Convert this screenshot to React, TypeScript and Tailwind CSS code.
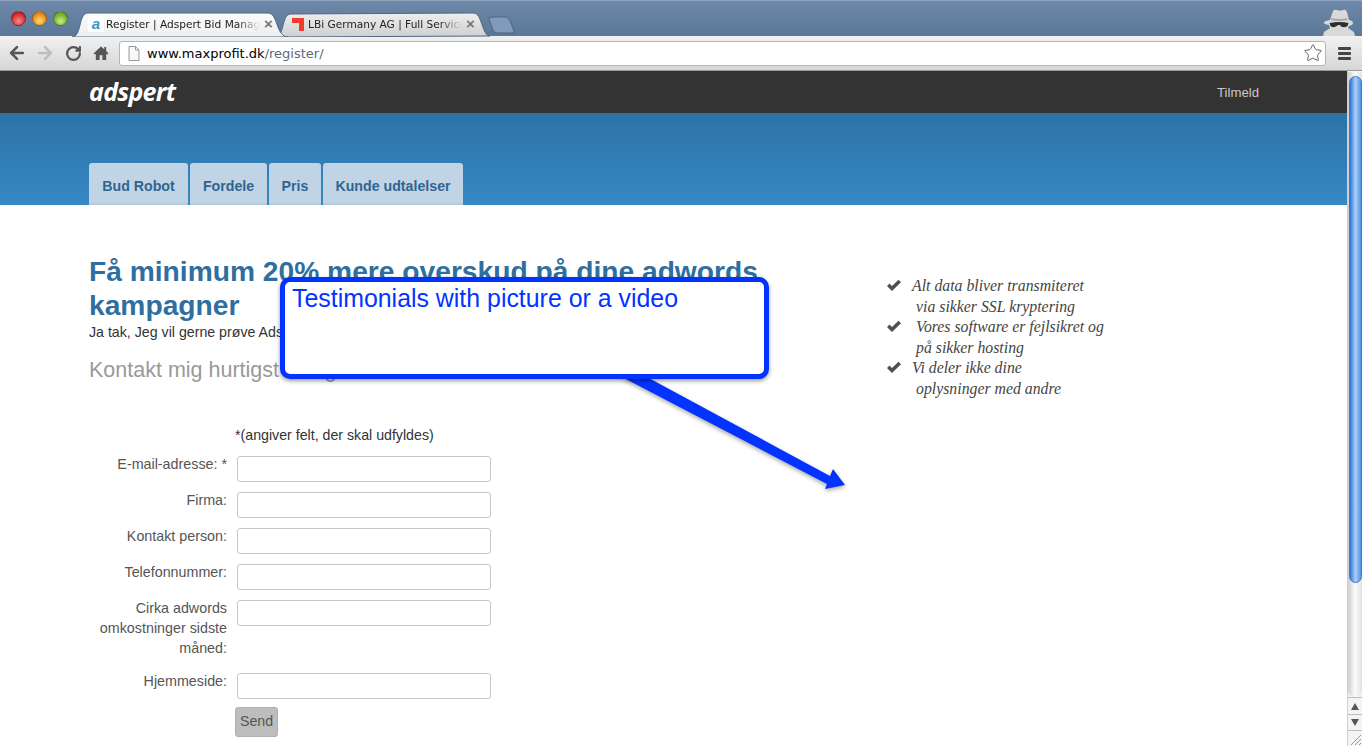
import { ArrowLeft, ArrowRight, RotateCw, Star } from "lucide-react";

const sans = "font-['Liberation_Sans',Arial,sans-serif]";

function TrafficLight({ color }: { color: string }) {
  return <span className="block w-[15px] h-[15px] rounded-full border border-black/30" style={{ background: color }} />;
}

function TabStrip() {
  return (
    <div className="relative h-[36px] bg-gradient-to-b from-[#6d88a8] to-[#5b7899] border-t border-[#8ea3bc] shrink-0">
      <div className="flex items-center gap-[6px] pl-[11px] pt-[10px]">
        <TrafficLight color="radial-gradient(circle at 50% 70%, #f88, #c9252b 70%)" />
        <TrafficLight color="radial-gradient(circle at 50% 70%, #fd6, #e0831c 70%)" />
        <TrafficLight color="radial-gradient(circle at 50% 70%, #ce8, #6aa52d 70%)" />
      </div>

      {/* tab shapes */}
      <svg className="absolute left-0 top-0" width="530" height="36">
        <defs>
          <linearGradient id="inactive" x1="0" y1="0" x2="0" y2="1">
            <stop offset="0" stopColor="#eeeeee" />
            <stop offset="1" stopColor="#cfcfcf" />
          </linearGradient>
          <linearGradient id="active" x1="0" y1="0" x2="0" y2="1">
            <stop offset="0" stopColor="#fbfbfb" />
            <stop offset="1" stopColor="#eeeeee" />
          </linearGradient>
        </defs>
        <path d="M276 36 C284 36 282 13 290 13 L474 12 C482 12 482 35 490 35 Z" fill="url(#inactive)" stroke="#4f6681" />
        <path d="M489 18 Q489 16 492 16 L506 16 Q509 16 511 22 L514 30 Q515 32 512 32 L498 32 Q494 32 493 29 Z" fill="#7f9abb" stroke="#4f6681" />
        <path d="M72 36 C82 36 78 12 88 12 L268 12 C278 12 276 36 288 36 Z" fill="url(#active)" stroke="#4f6681" />
      </svg>

      <div className="absolute left-[88px] top-[15px] w-[16px] h-[16px] bg-white flex items-center justify-center">
        <span className={`${sans} text-[15px] leading-[14px] font-bold italic text-[#2f9ad0]`}>a</span>
      </div>
      <div className="absolute left-[106px] top-[15px] w-[154px] h-[16px] overflow-hidden whitespace-nowrap font-['DejaVu_Sans',sans-serif] text-[10.600px] leading-[16px] text-[#222] [mask-image:linear-gradient(to_right,black_85%,transparent)]">
        Register | Adspert Bid Management
      </div>
      <span className="absolute left-[264px] top-[14px] text-[15px] leading-[18px] font-bold text-[#777] font-['Liberation_Sans',sans-serif]">×</span>

      <svg className="absolute left-[292px] top-[17px]" width="12" height="13">
        <path d="M0 0 H12 V13 H7 V5 H0 Z" fill="#f03c2e" />
      </svg>
      <div className="absolute left-[308px] top-[15px] w-[154px] h-[16px] overflow-hidden whitespace-nowrap font-['DejaVu_Sans',sans-serif] text-[10.600px] leading-[16px] text-[#222] [mask-image:linear-gradient(to_right,black_85%,transparent)]">
        LBi Germany AG | Full Service Agency
      </div>
      <span className="absolute left-[466px] top-[14px] text-[15px] leading-[18px] font-bold text-[#777] font-['Liberation_Sans',sans-serif]">×</span>

      {/* incognito figure */}
      <svg className="absolute left-[1322px] top-[7px]" width="34" height="28" viewBox="0 0 34 28">
        <path d="M8 12 L11 3 Q12 1 15 2 Q18 3 21 2 Q24 1 25 4 L27 12 Q31 13 31 15 Q31 17 27 18 L26 20 L32 24 L33 28 H1 L2 24 L8 20 L7 17 Q1 16 2 14 Q3 13 8 12 Z" fill="#d9d9d9" />
        <path d="M7.500 15 Q18 13 26.500 15 L25.500 18 Q23 20 19 18.500 L18 17 H16 L14 18.500 Q10 20 8.500 18 Z" fill="#2e2e2e" />
        <path d="M9.500 10 Q18 12 25 10 L25.500 12 Q17 14 9 12 Z" fill="#a8a8a8" />
      </svg>
    </div>
  );
}

function Toolbar() {
  return (
    <div className="h-[35px] shrink-0 flex items-center bg-gradient-to-b from-[#f1f1f1] to-[#d6d6d6] border-b border-[#9a9a9a]">
      <div className="w-[119px] flex items-center shrink-0 pl-[7px]">
        <ArrowLeft size={20} strokeWidth={3} className="text-[#555] shrink-0" />
        <ArrowRight size={20} strokeWidth={3} className="text-[#bdbdbd] shrink-0 ml-[8px]" />
        <RotateCw size={17} strokeWidth={3.200} className="text-[#555] shrink-0 ml-[10px]" />
        <svg width="16" height="16" viewBox="0 0 17 16" className="shrink-0 ml-[11px]">
          <path d="M8.500 1 L0.500 8.500 L2 9.500 L3 8.800 V15.500 H7 V10.500 H10 V15.500 H14 V8.800 L15 9.500 L16.500 8.500 L14 6 V1.500 H12 V4 Z" fill="#555" />
        </svg>
      </div>
      <div className="w-[1207px] h-[25px] bg-white border border-[#b5b5b5] rounded-[3px] flex items-center shrink-0 relative">
        <svg width="12" height="15" viewBox="0 0 12 15" className="ml-[8px] shrink-0">
          <path d="M1 .5 H7.500 L11 4 V14.500 H1 Z M7.500 .5 V4 H11" fill="#f8f8f8" stroke="#999" />
        </svg>
        <span className="ml-[7px] font-['DejaVu_Sans',sans-serif] text-[13px] leading-none text-black">
          www.maxprofit.dk<span className="text-[#5d6b76]">/register/</span>
        </span>
        <Star size={20} strokeWidth={1.200} className="absolute right-[2px] top-[1px] text-[#666]" />
      </div>
      <div className="ml-[12px] flex flex-col gap-[2px] w-[13px] shrink-0">
        <span className="block h-[3px] bg-[#444] rounded-[1px]" />
        <span className="block h-[3px] bg-[#444] rounded-[1px]" />
        <span className="block h-[3px] bg-[#444] rounded-[1px]" />
      </div>
    </div>
  );
}

function Scrollbar() {
  return (
    <div className="w-[15px] shrink-0 bg-[#f4f4f4] border-l border-[#cfcfcf] flex flex-col">
      {/* rail capsule, with the blue thumb in it */}
      <div className="mt-[1px] h-[626px] rounded-b-full bg-gradient-to-r from-[#cfcfcf] via-[#fafafa] to-[#e2e2e2]">
        <div className="mx-auto pt-[4px]">
          <div className="mx-auto w-[13px] h-[507px] rounded-full bg-gradient-to-r from-[#2f74d6] via-[#a9d0f7] to-[#4f93e2] border border-[#3f78c8]" />
        </div>
      </div>
      <div className="flex-1" />
      <div className="h-[17px] border-t border-[#bdbdbd] flex items-center justify-center">
        <span className="block w-0 h-0 border-x-[4px] border-x-transparent border-b-[7px] border-b-[#555]" />
      </div>
      <div className="h-[17px] border-t border-b border-[#bdbdbd] flex items-center justify-center mb-[15px]">
        <span className="block w-0 h-0 border-x-[4px] border-x-transparent border-t-[7px] border-t-[#555]" />
      </div>
    </div>
  );
}

function NavTab({ label, width }: { label: string; width: string }) {
  return (
    <a className={`${width} h-[42px] bg-[#c0d4e6] rounded-t-[3px] border-b-2 border-[#b5cbdf] pt-[14px] text-center ${sans} text-[14.200px] leading-[18px] font-bold text-[#2f6690]`}>
      {label}
    </a>
  );
}

function Field({ label, mb }: { label: React.ReactNode; mb: string }) {
  return (
    <div className={`flex ${mb}`}>
      <label className="w-[138px] -mt-[2px] text-right text-[14.300px] leading-[20px] text-[#555] shrink-0">{label}</label>
      <input className="ml-[10px] w-[254px] h-[26px] bg-white border border-[#c8c8c8] rounded-[3px] shrink-0" />
    </div>
  );
}

function Check() {
  return (
    <svg width="16" height="13" viewBox="0 0 16 13" className="shrink-0 mt-[3px]">
      <path d="M1 7 L3.500 4.500 L6 7 L12.500 .8 L15 3.300 L6 12 Z" fill="#505050" />
    </svg>
  );
}

function Bullet({ first, second, indent }: { first: string; second: string; indent: string }) {
  return (
    <li>
      <div className="flex h-[21px]">
        <Check />
        <span className={indent}>{first}</span>
      </div>
      <div className="pl-[30px] h-[20px]">{second}</div>
    </li>
  );
}

export default function App() {
  return (
    <div className={`relative w-[1362px] h-[746px] overflow-hidden flex flex-col bg-white ${sans}`}>
      <TabStrip />
      <Toolbar />

      <div className="flex flex-1 min-h-0">
        <div className="w-[1347px] shrink-0 overflow-hidden">
          {/* top bar */}
          <div className="h-[42px] bg-[#333333] flex items-center pl-[89px] pr-[88px] justify-between">
            <span className="font-['Open_Sans',sans-serif] italic font-bold text-[25px] leading-none text-white tracking-[-0.7px] -mt-[1px]">adspert</span>
            <span className="text-[13.200px] text-[#c8c8c8] mt-[1px]">Tilmeld</span>
          </div>

          {/* blue header with tabs */}
          <div className="h-[92px] bg-gradient-to-b from-[#2c73a6] to-[#3788c4] flex items-end pl-[89px] gap-[2px]">
            <NavTab label="Bud Robot" width="w-[99px]" />
            <NavTab label="Fordele" width="w-[77px]" />
            <NavTab label="Pris" width="w-[52px]" />
            <NavTab label="Kunde udtalelser" width="w-[140px]" />
          </div>

          {/* main content */}
          <div className="flex pl-[89px] pt-[49px]">
            <div className="w-[797px] shrink-0">
              <h1 className="text-[28.200px] leading-[34px] font-bold text-[#2f6f9f] w-[700px]">
                Få minimum 20% mere overskud på dine adwords kampagner
              </h1>
              <p className="text-[14.200px] leading-[20px] text-[#333]">Ja tak, Jeg vil gerne prøve Adspert Bid Management</p>
              <h2 className="text-[21.500px] leading-[26px] text-[#999] mt-[15px]">Kontakt mig hurtigst muligt</h2>

              <p className="text-[14.200px] leading-[20px] text-[#333] mt-[42px] pl-[146px]">*(angiver felt, der skal udfyldes)</p>

              <div className="mt-[11px]">
                <Field label="E-mail-adresse: *" mb="mb-[10px]" />
                <Field label="Firma:" mb="mb-[10px]" />
                <Field label="Kontakt person:" mb="mb-[10px]" />
                <Field label="Telefonnummer:" mb="mb-[10px]" />
                <Field label={<>Cirka adwords omkostninger sidste måned:</>} mb="mb-[15px]" />
                <Field label="Hjemmeside:" mb="mb-[8px]" />
              </div>
              <button className="ml-[146px] h-[30px] w-[43px] rounded-[3px] bg-[#bdbdbd] border border-[#b0b0b0] text-[14.200px] text-[#555]">Send</button>
            </div>

            <ul className="font-['Liberation_Serif',serif] italic text-[15.800px] leading-[20px] text-[#444] pt-[22px]">
              <Bullet first="Alt data bliver transmiteret" second="via sikker SSL kryptering" indent="pl-[10px]" />
              <Bullet first="Vores software er fejlsikret og" second="på sikker hosting" indent="pl-[14px]" />
              <Bullet first="Vi deler ikke dine" second="oplysninger med andre" indent="pl-[10px]" />
            </ul>
          </div>
        </div>
        <Scrollbar />
      </div>

      {/* annotation arrow and callout drawn over the page */}
      <svg className="absolute left-[600px] top-[370px]" width="260" height="130" style={{ filter: "drop-shadow(0 2px 2px rgba(0,0,0,.35))" }}>
        <path d="M20 6 L45 6 L230 106 L233 99 L245 115 L225 119 L227 114 Z" fill="#0433ff" />
      </svg>
      <div className="absolute left-[280px] top-[277px] w-[489px] h-[102px] bg-white border-[5px] border-[#0433ff] rounded-[10px] shadow-[0_2px_4px_rgba(0,0,0,0.4)] pl-[7px] text-[24.900px] leading-[32px] text-[#0433ff]">
        Testimonials with picture or a video
      </div>

      {/* window resize grip */}
      <svg className="absolute right-0 bottom-0" width="14" height="14">
        <path d="M3 13 L13 3 M7 13 L13 7 M11 13 L13 11" stroke="#999" />
      </svg>
    </div>
  );
}
